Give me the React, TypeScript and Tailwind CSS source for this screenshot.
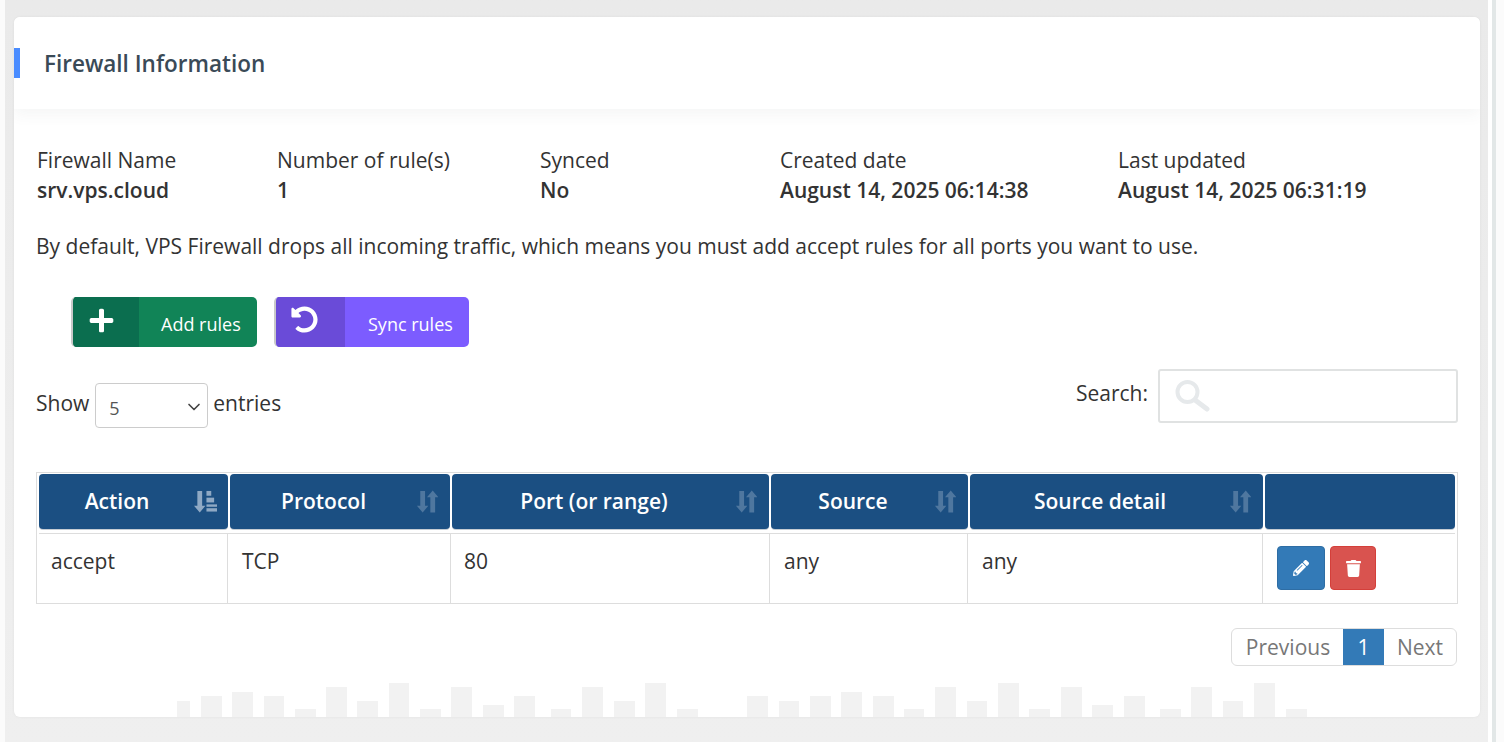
import React from 'react';
import { ChevronDown } from 'lucide-react';
import { FaPlus, FaUndoAlt, FaPencilAlt, FaTrash } from 'react-icons/fa';

const infoCols = [
  { label: 'Firewall Name', value: 'srv.vps.cloud', width: 'w-[240px]' },
  { label: 'Number of rule(s)', value: '1', width: 'w-[263px]' },
  { label: 'Synced', value: 'No', width: 'w-[240px]' },
  { label: 'Created date', value: 'August 14, 2025 06:14:38', width: 'w-[338px]' },
  { label: 'Last updated', value: 'August 14, 2025 06:31:19', width: 'w-[300px]' },
];

const headers = ['Action', 'Protocol', 'Port (or range)', 'Source', 'Source detail', ''];
const cells = ['accept', 'TCP', '80', 'any', 'any'];

// decorative skyline at the bottom of the card: [left, width, height]
const bars: [number, number, number][] = [
  [177, 13, 16], [201, 21, 21], [232, 21, 25], [264, 20, 21], [295, 21, 8], [326, 21, 30],
  [357, 21, 16], [389, 20, 34], [420, 21, 8], [451, 21, 30], [483, 21, 12], [514, 21, 21],
  [551, 20, 8], [582, 21, 30], [614, 21, 16], [645, 21, 34], [677, 21, 8],
  [747, 21, 21], [779, 20, 16], [810, 21, 21], [841, 21, 25], [873, 21, 21], [904, 20, 8],
  [935, 21, 30], [967, 20, 16], [998, 21, 34], [1029, 21, 8], [1061, 21, 30], [1092, 21, 12],
  [1124, 21, 21], [1160, 21, 8], [1191, 21, 30], [1223, 20, 16], [1254, 21, 34], [1286, 21, 8],
];

const SortIcon = () => (
  <svg viewBox="0 0 24 24" className="h-[23px] w-[23px] text-[#4f779f]" fill="currentColor">
    <path d="M5.5 1h5v15.5h3.4L8 23.5 2 16.5h3.5z" />
    <path d="M12.5 7.5 18.5.5l6 7H21v16h-5v-16z" />
  </svg>
);

const SortedIcon = () => (
  <svg viewBox="0 0 24 24" className="h-[23px] w-[23px] text-[#8fa9c4]" fill="currentColor">
    <path d="M3.5 1h5v15.5h3.4L6 23.5 0 16.5h3.5z" />
    <rect x="13" y="1" width="5" height="5" />
    <rect x="13" y="8" width="8" height="5" />
    <rect x="13" y="15" width="11" height="2.5" />
    <rect x="13" y="19" width="11" height="3.5" />
  </svg>
);

export default function App() {
  return (
    <div className="flex h-[742px] w-[1504px] overflow-hidden bg-white font-['Open_Sans',sans-serif] text-[21px] leading-[30px] text-[#333]">
      <div className="w-[5px] bg-[#fbfbfb]" />
      <div className="flex w-[1483px] flex-col bg-gradient-to-b from-[#eaeaea] to-[#efefef] pl-[9px] pr-[8px] pt-[17px]">
        <div className="relative h-[700px] overflow-hidden rounded-md bg-white shadow-[0_0_3px_rgba(0,0,0,0.06)]">
          <svg className="absolute left-0 top-[660px]" width="1466" height="40" viewBox="14 677 1466 40">
            {bars.map(([x, w, h]) => (
              <rect key={x} x={x} y={717 - h} width={w} height={h} fill="#f2f2f2" />
            ))}
          </svg>

          <div className="relative flex h-[92px] items-center bg-white shadow-[0_6px_14px_rgba(60,70,70,0.05)]">
            <div className="h-[30px] w-[6px] bg-[#4a8cff]" />
            <h2 className="ml-[24px] pt-[2px] text-[22.5px] font-semibold text-[#3a4a57]">Firewall Information</h2>
          </div>

          <div className="relative px-[22px] pt-[36px]">
            <div className="flex pl-px">
              {infoCols.map((col) => (
                <div key={col.label} className={col.width}>
                  <div>{col.label}</div>
                  <div className="font-semibold">{col.value}</div>
                </div>
              ))}
            </div>

            <p className="mt-[26px]">
              By default, VPS Firewall drops all incoming traffic, which means you must add accept rules for all ports you want to use.
            </p>

            <div className="ml-[35px] mt-[36px] flex gap-[17px] text-[18px] text-white">
              <button className="flex h-[50px] w-[186px] overflow-hidden rounded-[5px] border-l-2 border-[#c9c9c9] bg-[#118457]">
                <span className="h-full w-[66px] bg-[#0b6e4f] pl-[15px] pt-[10px]">
                  <FaPlus className="h-[27px] w-[27px]" />
                </span>
                <span className="ml-[22px] mt-[12px]">Add rules</span>
              </button>
              <button className="flex h-[50px] w-[195px] overflow-hidden rounded-[5px] border-l-2 border-[#c9c9c9] bg-[#7c5cff]">
                <span className="h-full w-[69px] bg-[#6a4bd8] pl-[15px] pt-[9px]">
                  <FaUndoAlt className="h-[27px] w-[27px]" />
                </span>
                <span className="ml-[23px] mt-[12px]">Sync rules</span>
              </button>
            </div>

            <div className="mt-[22px] flex h-[59px] justify-between">
              <div className="mt-[14px] flex h-[45px] items-center">
                <span className="mb-[5px]">Show</span>
                <div className="ml-[6px] flex h-[45px] w-[113px] items-center justify-between rounded border border-[#ccc] pl-[13px] pr-[3px] text-[18px] text-[#555]">
                  <span className="pt-[4px]">5</span>
                  <ChevronDown className="mt-[3px] h-[20px] w-[20px] text-[#444]" strokeWidth={2} />
                </div>
                <span className="mb-[5px] ml-[5px]">entries</span>
              </div>
              <div className="flex h-[54px] items-center">
                <span className="mb-[6px]">Search:</span>
                <div className="relative ml-[10px]">
                  <input className="block h-[54px] w-[300px] rounded-[3px] border-2 border-[#e0e2e2] bg-white outline-none" />
                  <svg viewBox="0 0 36 36" className="absolute left-[16px] top-[10px] h-[36px] w-[36px]" fill="none" stroke="#e6e9eb">
                    <circle cx="13.5" cy="13" r="10" strokeWidth="4" />
                    <path d="M21 21l12 9" strokeWidth="5" strokeLinecap="round" />
                  </svg>
                </div>
              </div>
            </div>

            <div className="mt-[44px] h-[132px] w-[1422px] border border-[#ddd] px-[2px] pt-px">
              <div className="grid h-[55px] grid-cols-[189px_220px_317px_197px_293px_190px] gap-x-[2px] font-semibold text-white">
                {headers.map((h, i) => (
                  <div key={i} className="relative flex items-center justify-center rounded-[4px] bg-[#1b4f82] pb-[1px] pr-[33px] shadow-[0_1px_0_#c5ccd3]">
                    {h}
                    {h === 'Action' && (
                      <span className="absolute right-[11px] top-[16px]"><SortedIcon /></span>
                    )}
                    {h !== 'Action' && h !== '' && (
                      <span className="absolute right-[12px] top-[16px]"><SortIcon /></span>
                    )}
                  </div>
                ))}
              </div>
              <div className="mt-[4px] grid h-[71px] grid-cols-[189px_223px_319px_198px_295px_189px] border-t border-[#ddd]">
                {cells.map((c, i) => (
                  <div key={i} className={i === 0 ? 'border-r border-[#ddd] pl-[12px] pt-[12px]' : i === 2 ? 'border-r border-[#ddd] pl-[13px] pt-[12px]' : 'border-r border-[#ddd] pl-[14px] pt-[12px]'}>{c}</div>
                ))}
                <div className="flex gap-[5px] pl-[14px] pt-[12px]">
                  <button className="flex h-[44px] w-[48px] items-center justify-center rounded-[4px] border border-[#2e6da4] bg-[#337ab7] text-white">
                    <FaPencilAlt className="h-[16px] w-[16px]" />
                  </button>
                  <button className="flex h-[44px] w-[46px] items-center justify-center rounded-[4px] border border-[#d43f3a] bg-[#d9534f] text-white">
                    <FaTrash className="h-[17px] w-[17px]" />
                  </button>
                </div>
              </div>
            </div>

            <div className="mt-[24px] flex justify-end pr-px">
              <div className="flex h-[38px] items-center overflow-hidden rounded-[6px] border border-[#ddd] text-[#777]">
                <span className="flex h-full w-[111px] items-center justify-center pl-px">Previous</span>
                <span className="flex h-[38px] w-[41px] items-center justify-center bg-[#337ab7] text-white">1</span>
                <span className="flex h-full w-[72px] items-center justify-center">Next</span>
              </div>
            </div>
          </div>
        </div>
      </div>
      <div className="w-[4px] bg-white" />
      <div className="w-[4px] bg-[#e2e7e7]" />
      <div className="w-[8px] bg-[#fbfbfb]" />
    </div>
  );
}
